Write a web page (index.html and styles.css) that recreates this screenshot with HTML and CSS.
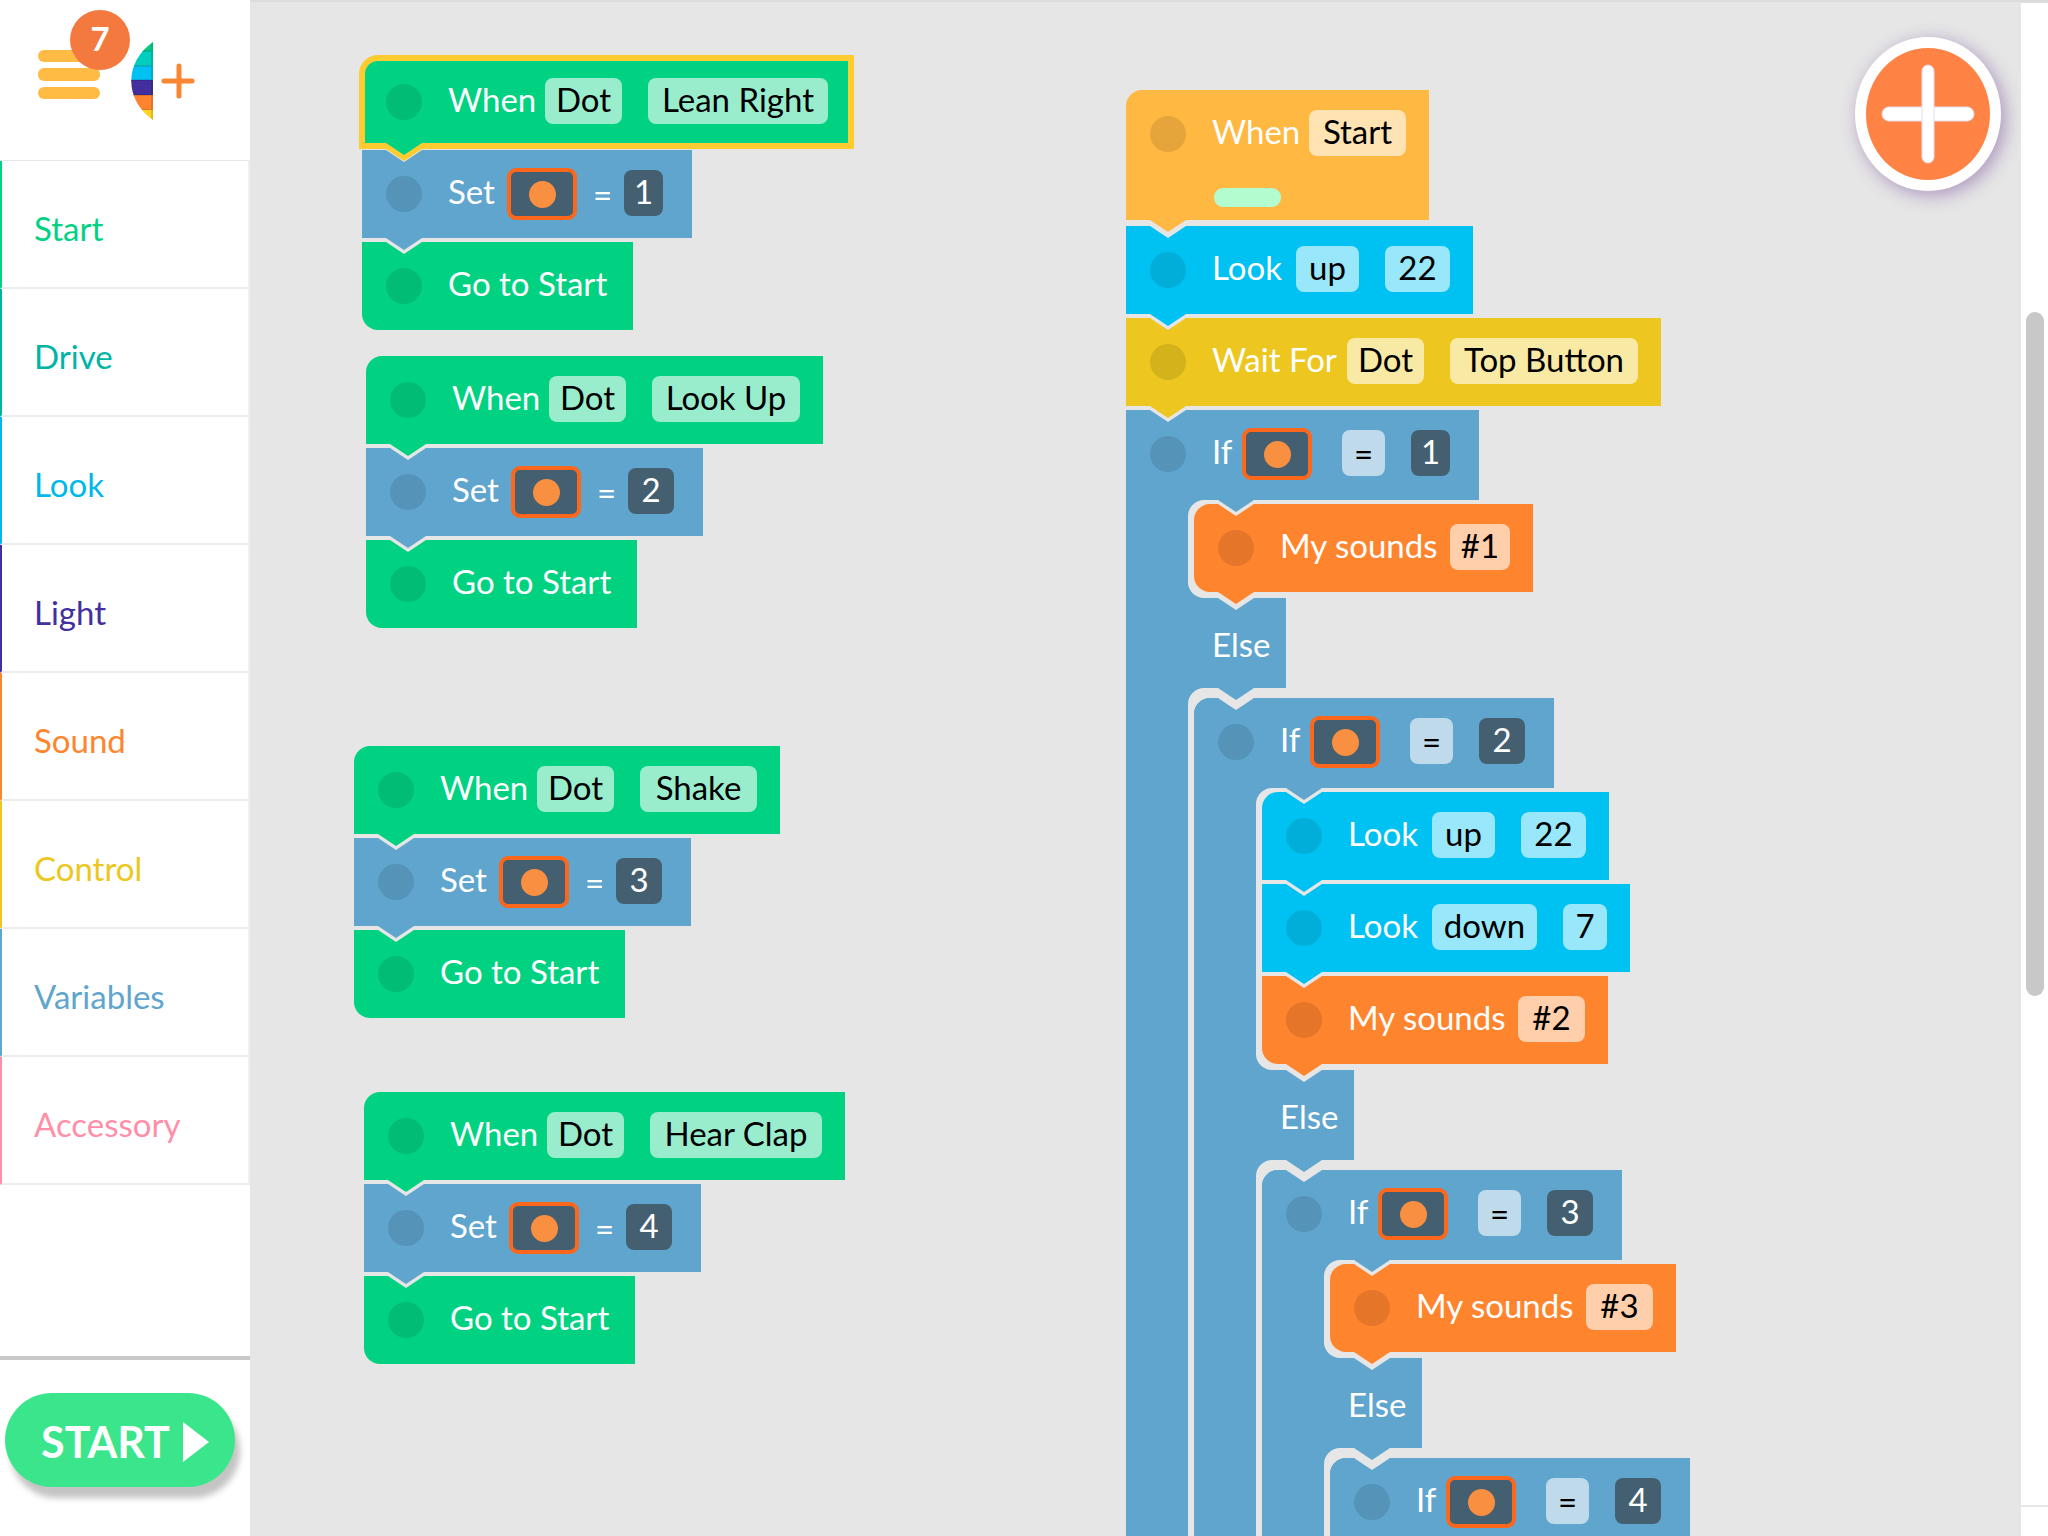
FILE: index.html
```html
<!DOCTYPE html>
<html lang="en">
<head>
<meta charset="utf-8">
<title>Block Editor</title>
<link rel="stylesheet" href="styles.css">
</head>
<body>
<div class="app">
  <aside class="sidebar">
    <header class="brand">
      <button class="menu" aria-label="Menu, 7 new">
        <svg width="62" height="50" viewBox="0 0 62 50" aria-hidden="true"><g fill="#ffbb44"><rect width="62" height="12" rx="6"/><rect y="18" width="62" height="13" rx="6"/><rect y="37" width="62" height="12" rx="6"/></g></svg>
        <span class="badge">7</span>
      </button>
      <button class="project" aria-label="New project">
        <svg width="66" height="78" viewBox="0 0 66 78" aria-hidden="true">
          <clipPath id="lens"><path d="M22 0V78C-7 58-7 20 22 0Z"/></clipPath>
          <g clip-path="url(#lens)"><rect width="22" height="10" fill="#00cf82"/><rect y="9" width="22" height="16" fill="#00cdbd"/><rect y="24" width="22" height="15" fill="#00c2f2"/><rect y="38" width="22" height="16" fill="#432f9d"/><rect y="53" width="22" height="15" fill="#ff842e"/><rect y="68" width="22" height="10" fill="#fdd420"/><g fill="#000" opacity=".12"><rect y="8" width="22" height="2"/><rect y="23" width="22" height="2"/><rect y="37" width="22" height="2"/><rect y="52" width="22" height="2"/><rect y="67" width="22" height="1"/><rect x="20" width="2" height="78"/></g></g>
          <path d="M48 24V54M33 39H61" stroke="#fb8632" stroke-width="5" stroke-linecap="round"/>
        </svg>
      </button>
    </header>
    <nav class="categories">
      <a class="cat cat-start" href="#start">Start</a>
      <a class="cat cat-drive" href="#drive">Drive</a>
      <a class="cat cat-look" href="#look">Look</a>
      <a class="cat cat-light" href="#light">Light</a>
      <a class="cat cat-sound" href="#sound">Sound</a>
      <a class="cat cat-control" href="#control">Control</a>
      <a class="cat cat-variables" href="#variables">Variables</a>
      <a class="cat cat-accessory" href="#accessory">Accessory</a>
    </nav>
    <footer class="run">
      <button class="run-button">START<svg width="26" height="40" viewBox="0 0 26 40" aria-hidden="true"><path d="M0 0L26 20L0 40Z" fill="#fff"/></svg></button>
    </footer>
  </aside>

  <main class="workspace">
    <section class="stack stack-lean">
      <div class="block green first selected"><i class="dot"></i><span class="word w-when">When</span><button class="pill p-dot">Dot</button><button class="pill p-lean">Lean Right</button><i class="tab-outline"></i></div>
      <div class="block blue"><i class="dot"></i><span class="word w-set">Set</span><button class="variable" aria-label="Orange variable"><i class="ball"></i></button><span class="equals">=</span><button class="pill number p-1">1</button></div>
      <div class="block green last end"><i class="dot"></i><span class="word w-goto">Go to Start</span></div>
    </section>

    <section class="stack stack-lookup">
      <div class="block green first"><i class="dot"></i><span class="word w-when">When</span><button class="pill p-dot">Dot</button><button class="pill p-lookup">Look Up</button></div>
      <div class="block blue"><i class="dot"></i><span class="word w-set">Set</span><button class="variable" aria-label="Orange variable"><i class="ball"></i></button><span class="equals">=</span><button class="pill number">2</button></div>
      <div class="block green last end"><i class="dot"></i><span class="word w-goto">Go to Start</span></div>
    </section>

    <section class="stack stack-shake">
      <div class="block green first"><i class="dot"></i><span class="word w-when">When</span><button class="pill p-dot">Dot</button><button class="pill p-shake">Shake</button></div>
      <div class="block blue"><i class="dot"></i><span class="word w-set">Set</span><button class="variable" aria-label="Orange variable"><i class="ball"></i></button><span class="equals">=</span><button class="pill number">3</button></div>
      <div class="block green last end"><i class="dot"></i><span class="word w-goto">Go to Start</span></div>
    </section>

    <section class="stack stack-clap">
      <div class="block green first"><i class="dot"></i><span class="word w-when">When</span><button class="pill p-dot">Dot</button><button class="pill p-clap">Hear Clap</button></div>
      <div class="block blue"><i class="dot"></i><span class="word w-set">Set</span><button class="variable" aria-label="Orange variable"><i class="ball"></i></button><span class="equals">=</span><button class="pill number">4</button></div>
      <div class="block green last end"><i class="dot"></i><span class="word w-goto">Go to Start</span></div>
    </section>

    <section class="stack stack-main">
      <div class="block amber first event"><div class="event-row"><i class="dot"></i><span class="word w-when">When</span><button class="pill p-start">Start</button></div><i class="progress"></i></div>
      <div class="block cyan"><i class="dot"></i><span class="word w-look">Look</span><button class="pill p-up">up</button><button class="pill p-22">22</button></div>
      <div class="block yellow"><i class="dot"></i><span class="word w-wait">Wait For</span><button class="pill p-dot">Dot</button><button class="pill p-top">Top Button</button></div>
      <div class="branch">
        <div class="block blue if"><i class="dot"></i><span class="word w-if">If</span><button class="variable" aria-label="Orange variable"><i class="ball"></i></button><button class="pill p-eq">=</button><button class="pill number p-1">1</button></div>
        <div class="mouth">
          <div class="block orange first last"><i class="dot"></i><span class="word w-sounds">My sounds</span><button class="pill p-s1">#1</button></div>
        </div>
        <div class="block blue else"><span class="word">Else</span></div>
        <div class="mouth else-mouth">
          <div class="branch nested">
            <div class="block blue if first"><i class="dot"></i><span class="word w-if">If</span><button class="variable" aria-label="Orange variable"><i class="ball"></i></button><button class="pill p-eq">=</button><button class="pill number">2</button></div>
            <div class="mouth">
              <div class="block cyan first"><i class="dot"></i><span class="word w-look">Look</span><button class="pill p-up">up</button><button class="pill p-22">22</button></div>
              <div class="block cyan"><i class="dot"></i><span class="word w-look">Look</span><button class="pill p-down">down</button><button class="pill p-7">7</button></div>
              <div class="block orange last"><i class="dot"></i><span class="word w-sounds">My sounds</span><button class="pill p-sound">#2</button></div>
            </div>
            <div class="block blue else"><span class="word">Else</span></div>
            <div class="mouth else-mouth">
              <div class="branch nested">
                <div class="block blue if first"><i class="dot"></i><span class="word w-if">If</span><button class="variable" aria-label="Orange variable"><i class="ball"></i></button><button class="pill p-eq">=</button><button class="pill number">3</button></div>
                <div class="mouth">
                  <div class="block orange first last"><i class="dot"></i><span class="word w-sounds">My sounds</span><button class="pill p-sound">#3</button></div>
                </div>
                <div class="block blue else"><span class="word">Else</span></div>
                <div class="mouth else-mouth">
                  <div class="branch nested">
                    <div class="block blue if first"><i class="dot"></i><span class="word w-if">If</span><button class="variable" aria-label="Orange variable"><i class="ball"></i></button><button class="pill p-eq">=</button><button class="pill number">4</button></div>
                  </div>
                </div>
              </div>
            </div>
          </div>
        </div>
      </div>
    </section>

    <button class="add" aria-label="Add block">
      <svg width="94" height="100" viewBox="0 0 94 100" aria-hidden="true"><g fill="#fff" stroke="#e4dcec"><rect x="1" y="43" width="92" height="14" rx="7"/><rect x="41" y="1" width="12" height="98" rx="6"/></g></svg>
    </button>
  </main>

  <div class="scroll-track"><div class="scroll-thumb"></div></div>
</div>
</body>
</html>
```
FILE: styles.css
```css
* { box-sizing: border-box; }

body {
  margin: 0;
  font-family: Lato, "Open Sans", sans-serif;
  font-size: 33px;
  line-height: 40px;
  background: #fff;
}

button {
  font: inherit;
  border: 0;
  padding: 0;
  background: none;
  cursor: pointer;
}

.app {
  display: flex;
  height: 100vh;
  overflow: hidden;
}

/* Sidebar */

.sidebar {
  display: flex;
  flex-direction: column;
  flex: 0 0 250px;
  background: #fff;
}

.brand {
  display: flex;
  align-items: center;
  gap: 31px;
  height: 160px;
  padding: 0 0 10px 38px;
}

.menu { position: relative; height: 50px; }
.menu svg, .project svg { display: block; }
.project { height: 78px; margin-top: 12px; }

.badge {
  position: absolute;
  left: 32px;
  top: -40px;
  width: 60px;
  height: 60px;
  border-radius: 50%;
  background: #f4793f;
  color: #fff;
  font-weight: 700;
  line-height: 56px;
  text-align: center;
}

.categories {
  display: flex;
  flex-direction: column;
  border-top: 1px solid #e8e8e8;
}

.cat {
  height: 128px;
  padding: 47px 0 0 32px;
  border-left: 2px solid var(--c);
  border-bottom: 2px solid #ececec;
  border-right: 2px solid #f0f0f0;
  text-decoration: none;
  color: var(--c);
}

.cat-start { --c: #00d282; }
.cat-drive { --c: #00b5a5; }
.cat-look { --c: #00b9ea; }
.cat-light { --c: #432f9d; }
.cat-sound { --c: #ff842e; }
.cat-control { --c: #edc720; }
.cat-variables { --c: #5fa5cd; }
.cat-accessory { --c: #ff8fa8; }

.run {
  height: 180px;
  margin-top: auto;
  padding: 33px 5px;
  border-top: 4px solid #c8c8c8;
}

.run-button {
  display: flex;
  align-items: center;
  justify-content: center;
  gap: 13px;
  width: 230px;
  height: 94px;
  padding: 3px 0 0 10px;
  border-radius: 47px;
  background: #3be58b;
  box-shadow: 5px 11px 6px #c4c4c4;
  color: #fff;
  font-size: 43px;
  font-weight: 700;
}

/* Workspace */

.workspace {
  position: relative;
  flex: 1;
  overflow: hidden;
  background: #e6e6e6;
  box-shadow: inset 0 2px #dcdcdc;
}

.stack {
  position: absolute;
  display: flex;
  flex-direction: column;
  align-items: flex-start;
  gap: 4px;
}

.stack-lean { left: 112px; top: 58px; }
.stack-lookup { left: 116px; top: 356px; }
.stack-shake { left: 104px; top: 746px; }
.stack-clap { left: 114px; top: 1092px; }
.stack-main { left: 876px; top: 90px; }

.block {
  --tab: 24px;
  position: relative;
  display: flex;
  align-items: center;
  height: 88px;
  padding: 0 23px 0 24px;
  background: var(--fill);
  color: #fff;
  white-space: nowrap;
}

.green { --fill: #00d282; }
.blue { --fill: #5fa5cd; }
.amber { --fill: #ffb841; }
.cyan { --fill: #00c2f2; }
.yellow { --fill: #edc720; }
.orange { --fill: #ff842e; }

/* Notch cut in the top edge, and the tab that drops into the next block */
.block::before, .block::after, .tab-outline {
  content: "";
  position: absolute;
  left: 24px;
  width: 36px;
  height: 12px;
  clip-path: polygon(0 0, 100% 0, 50% 100%);
}
.block::before { top: 0; background: #e6e6e6; }
.block::after { left: var(--tab); top: 100%; z-index: 2; background: var(--fill); }

.first { border-top-left-radius: 16px; }
.last { border-bottom-left-radius: 16px; }
.stack > .first::before, .end::after { display: none; }

/* The outline is centred on the block's edge */
.selected {
  height: 94px;
  margin: -3px;
  padding: 0 20px 0 21px;
  border: 6px solid #fecb30;
  border-radius: 19px 0 0 0;
}
.selected::after, .selected .tab-outline { left: 21px; }
.tab-outline { top: 88px; z-index: 1; background: #fecb30; }

.dot {
  flex: none;
  width: 36px;
  height: 36px;
  margin-right: 26px;
  border-radius: 50%;
  background: rgba(0, 0, 0, .1);
}

.word { padding-bottom: 6px; }
.w-when { width: 97px; }
.w-set { width: 59px; }
.w-look { width: 84px; }
.w-wait { width: 135px; }
.w-if { width: 30px; }
.w-sounds { width: 170px; }
.w-goto { width: 162px; }

.pill {
  width: 46px;
  height: 46px;
  margin-bottom: 2px;
  padding-bottom: 4px;
  border-radius: 8px;
  background: rgba(255, 255, 255, .6);
  color: #000;
}
.pill + .pill { margin-left: 26px; }
.p-dot { width: 77px; }
.p-lean { width: 180px; }
.p-lookup { width: 148px; }
.p-shake { width: 117px; }
.p-clap { width: 172px; }
.p-start { width: 97px; }
.p-up { width: 63px; }
.p-22 { width: 65px; }
.p-down { width: 105px; }
.p-7 { width: 44px; }
.p-top { width: 188px; }
.p-s1 { width: 60px; }
.p-sound { width: 67px; }
.p-1 { width: 39px; }
.p-eq { width: 43px; margin-left: 30px; padding: 0; }

.number {
  margin-right: 6px;
  background: #445f70;
  color: #fff;
}

.variable {
  display: grid;
  place-items: center;
  width: 70px;
  height: 52px;
  border: 4px solid #fd671c;
  border-radius: 9px;
  background: #445f70;
}

.ball {
  width: 27px;
  height: 27px;
  border-radius: 50%;
  background: #f98f41;
}

.equals { width: 47px; padding-left: 4px; text-align: center; }

.event {
  flex-direction: column;
  align-items: flex-start;
  height: 130px;
  margin-bottom: 2px;
}
.event-row { display: flex; align-items: center; height: 88px; }
.progress {
  width: 67px;
  height: 19px;
  margin: 10px 0 0 64px;
  border-radius: 9px;
  background: #b3fcd0;
}

/* If / Else: a spine on the left holds the rows of the branch */
.branch {
  background: linear-gradient(#5fa5cd, #5fa5cd) 0 0 / 86px 100% no-repeat;
}
.nested { border-top-left-radius: 16px; }
.branch .blue { width: fit-content; }
.if { height: 90px; padding-bottom: 2px; }
.if, .else { --tab: 92px; }
.else { height: 90px; min-width: 160px; padding: 8px 0 0 86px; }
.else::before { left: 92px; }

.mouth {
  display: flex;
  flex-direction: column;
  align-items: flex-start;
  gap: 4px;
  margin-left: 62px;
  padding: 4px 0 6px 6px;
  border-radius: 16px 0 0 16px;
  background: #e6e6e6;
}
.else-mouth { padding-top: 10px; }

.add {
  position: absolute;
  right: 20px;
  top: 37px;
  display: grid;
  place-items: center;
  width: 146px;
  height: 154px;
  border: 11px solid #fff;
  border-radius: 50%;
  background: #ff8344;
  box-shadow: 4px 4px 18px rgba(100, 50, 140, .45);
}

.scroll-track {
  display: flex;
  flex-direction: column;
  flex: 0 0 27px;
  border-top: 3px solid #dcdcdc;
  background: #fff;
}
.scroll-track::after {
  content: "";
  height: 29px;
  margin-top: auto;
  border-top: 2px solid #e6e6e6;
}
.scroll-thumb {
  width: 18px;
  height: 684px;
  margin: 309px 0 0 5px;
  border-radius: 9px;
  background: #c8c8c8;
}
```
